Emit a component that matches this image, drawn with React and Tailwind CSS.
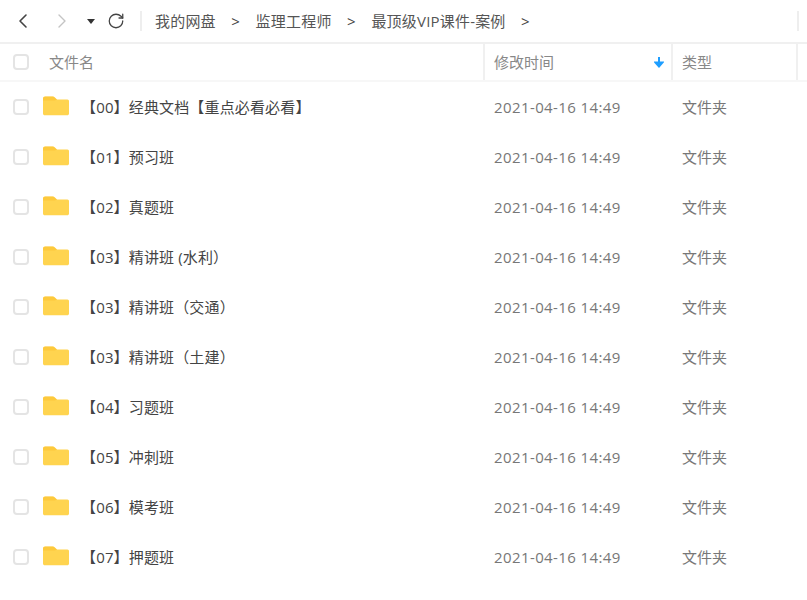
import { ChevronLeft, ChevronRight, RotateCw } from "lucide-react";

const font = { fontFamily: '"Open Sans", "Noto Sans CJK SC", sans-serif' };

const files = [
  "【00】经典文档【重点必看必看】",
  "【01】预习班",
  "【02】真题班",
  "【03】精讲班 (水利）",
  "【03】精讲班（交通）",
  "【03】精讲班（土建）",
  "【04】习题班",
  "【05】冲刺班",
  "【06】模考班",
  "【07】押题班",
];

const crumbs = ["我的网盘", "监理工程师", "最顶级VIP课件-案例"];

function FolderIcon() {
  return (
    <svg width="26" height="20" viewBox="1 0 24 20" preserveAspectRatio="none" className="shrink-0">
      <path d="M1 2.500C1 1.400 1.800 .5 3 .5h7c.8 0 1.300.3 1.900 1l2 2.100H23.500c1 0 1.500.8 1.500 1.700V17.500c0 1-.7 1.800-1.700 1.800H2.700C1.700 19.300 1 18.500 1 17.500z" fill="#ffd44f" />
      <path d="M1 2.500C1 1.400 1.800 .5 3 .5h7c.8 0 1.300.3 1.900 1l2 2.100c-1 .8-2 1-3.400 1H1z" fill="#fbc02d" opacity="0.55" />
    </svg>
  );
}

function Checkbox() {
  return <span className="block h-[16px] w-[16px] shrink-0 rounded-[4px] border-2 border-[#e4e4e4] bg-white" />;
}

export default function App() {
  return (
    <div className="h-[600px] w-[807px] overflow-hidden bg-white text-[15px] text-[#666]" style={font}>
      <div className="flex h-[44px] items-center border-b-2 border-[#f0f0f0]">
        <ChevronLeft size={24} strokeWidth={1.6} className="ml-[11px] text-[#444]" />
        <ChevronRight size={24} strokeWidth={1.4} className="ml-[15px] text-[#c4c4c4]" />
        <span className="ml-[13px] h-0 w-0 border-x-[4px] border-t-[5px] border-x-transparent border-t-[#333]" />
        <RotateCw size={18} strokeWidth={1.7} className="ml-[12px] text-[#444]" />
        <span className="ml-[15px] h-[20px] w-[2px] bg-[#eeeeee]" />
        <div className="ml-[13px] flex items-center tracking-[0.2px] text-[#555]">
          {crumbs.map((c) => (
            <div key={c} className="flex items-center">
              <span className="whitespace-nowrap">{c}</span>
              <span className="mx-[15.5px] text-[#444]">&gt;</span>
            </div>
          ))}
        </div>
        <span className="ml-auto mr-[8px] h-[20px] w-[2px] bg-[#eeeeee]" />
      </div>

      <div className="flex h-[38px] items-center border-b-2 border-[#f7f7f7] text-[#888]">
        <div className="flex w-[483px] items-center pl-[13px]">
          <Checkbox />
          <span className="ml-[20px]">文件名</span>
        </div>
        <div className="flex h-full w-[188px] items-center justify-between border-l-2 border-[#f0f0f0] pl-[9px] pr-[7px]">
          <span>修改时间</span>
          <svg width="10" height="12" viewBox="0 0 10 12">
            <path d="M5 1v9M1.500 6.500 5 10.500 8.500 6.500z" stroke="#1e9eff" strokeWidth="2" fill="#1e9eff" />
          </svg>
        </div>
        <div className="flex h-full w-[127px] items-center border-x-2 border-[#f0f0f0] pl-[9px]">类型</div>
      </div>

      <div>
        {files.map((name, i) => (
          <div key={i} className="flex h-[50px] items-center">
            <div className="flex w-[484px] items-center pl-[13px]">
              <Checkbox />
              <div className="ml-[14px] mt-[-2px]">
                <FolderIcon />
              </div>
              <span className="ml-[12px] whitespace-nowrap tracking-[0.15px] text-[#444]">{name}</span>
            </div>
            <div className="w-[188px] pl-[10px] tracking-[0.4px] text-[#777]">2021-04-16 14:49</div>
            <div className="pl-[10px] text-[#777]">文件夹</div>
          </div>
        ))}
      </div>
    </div>
  );
}
